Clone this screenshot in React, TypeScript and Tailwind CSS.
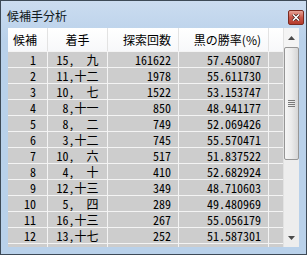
import React from 'react'

type Row = [number, string, number, string]

const rows: Row[] = [
  [1, '15,　九', 161622, '57.450807'],
  [2, '11,十二', 1978, '55.611730'],
  [3, '10,　七', 1522, '53.153747'],
  [4, ' 8,十一', 850, '48.941177'],
  [5, ' 8,　二', 749, '52.069426'],
  [6, ' 3,十二', 745, '55.570471'],
  [7, '10,　六', 517, '51.837522'],
  [8, ' 4,　十', 410, '52.682924'],
  [9, '12,十三', 349, '48.710603'],
  [10, ' 5,　四', 289, '49.480969'],
  [11, '16,十三', 267, '55.056179'],
  [12, '13,十七', 252, '51.587301'],
]

const mono = "font-['Noto_Sans_Mono_CJK_JP','Noto_Sans_CJK_JP',monospace]"

export default function App() {
  return (
    <div className="w-[307px] h-[255px] border border-[#3d4a57] bg-gradient-to-b from-[#cbdcf0] to-[#b9d1ea] to-[40px] flex flex-col font-['Noto_Sans_CJK_JP',sans-serif] text-[12px] text-black overflow-hidden">
      {/* title bar */}
      <div className="h-[27px] flex items-start justify-between pl-[6px] pr-[2px] shrink-0">
        <span className="mt-[7px] leading-[16px] text-[12px] text-[#101820]">候補手分析</span>
        <div className="mt-[9px] w-[16px] h-[15px] rounded-[2px] border border-[#7b2a20] bg-gradient-to-b from-[#e6a397] via-[#c9584a] to-[#b53a2b] flex items-center justify-center">
          <svg width="8" height="7" viewBox="0 0 8 7">
            <path d="M1 0.5 L7 6.5 M7 0.5 L1 6.5" stroke="#3a1510" strokeWidth="3" />
            <path d="M1 0.5 L7 6.5 M7 0.5 L1 6.5" stroke="#ffffff" strokeWidth="1.6" />
          </svg>
        </div>
      </div>

      {/* list */}
      <div className="mx-[7px] h-[219px] flex shrink-0 bg-[#cdcdcd]">
        <div className="w-[275px] flex flex-col">
          <div className="h-[23px] flex bg-gradient-to-b from-white to-[#f7f8fa] leading-[23px]">
            <div className="w-[40px] border-r border-[#e3e3e3] text-right pr-[10px]">候補</div>
            <div className="w-[60px] border-r border-[#e3e3e3] text-center">着手</div>
            <div className="w-[71px] border-r border-[#e3e3e3] text-right pr-[7px]">探索回数</div>
            <div className="w-[90px] border-r border-[#e3e3e3] text-right pr-[7px]">黒の勝率(%)</div>
            <div className="w-[14px]"></div>
          </div>
          {rows.map((r) => (
            <div key={r[0]} className={`h-[16px] flex border-t border-[#f4f4f4] leading-[15px] ${mono}`}>
              <div className="w-[40px] border-r border-[#f4f4f4] text-right pr-[11px]">{r[0]}</div>
              <div className="w-[60px] border-r border-[#f4f4f4] text-center whitespace-pre">{r[1]}</div>
              <div className="w-[71px] border-r border-[#f4f4f4] text-right pr-[7px]">{r[2]}</div>
              <div className="w-[90px] border-r border-[#f4f4f4] text-right pr-[7px]">{r[3]}</div>
              <div className="w-[14px]"></div>
            </div>
          ))}
          <div className="flex-1 flex border-t border-[#f4f4f4]">
            <div className="w-[40px] border-r border-[#f4f4f4]"></div>
            <div className="w-[60px] border-r border-[#f4f4f4]"></div>
            <div className="w-[71px] border-r border-[#f4f4f4]"></div>
            <div className="w-[90px] border-r border-[#f4f4f4]"></div>
          </div>
        </div>

        {/* scrollbar */}
        <div className="w-[16px] bg-[#ededed] border-l border-[#e2e2e2] flex flex-col items-center">
          <div className="h-[19px] w-full flex items-center justify-center bg-[#f4f4f4]">
            <svg width="7" height="4" viewBox="0 0 7 4"><path d="M3.5 0 L7 4 L0 4 Z" fill="#4a4a4a" /></svg>
          </div>
          <div className="h-[113px] w-[15px] ml-[-1px] rounded-[2px] border border-[#969696] bg-gradient-to-r from-[#f6f6f6] via-[#ebebeb] to-[#d6d6d6] flex flex-col items-center justify-center gap-[1px]">
            <div className="w-[7px] h-[1px] bg-[#7a7a7a]"></div>
            <div className="w-[7px] h-[1px] bg-[#7a7a7a]"></div>
            <div className="w-[7px] h-[1px] bg-[#7a7a7a]"></div>
            <div className="w-[7px] h-[1px] bg-[#7a7a7a]"></div>
          </div>
          <div className="flex-1"></div>
          <div className="h-[19px] w-full flex items-center justify-center">
            <svg width="7" height="4" viewBox="0 0 7 4"><path d="M0 0 L7 0 L3.5 4 Z" fill="#4a4a4a" /></svg>
          </div>
        </div>
      </div>
    </div>
  )
}
